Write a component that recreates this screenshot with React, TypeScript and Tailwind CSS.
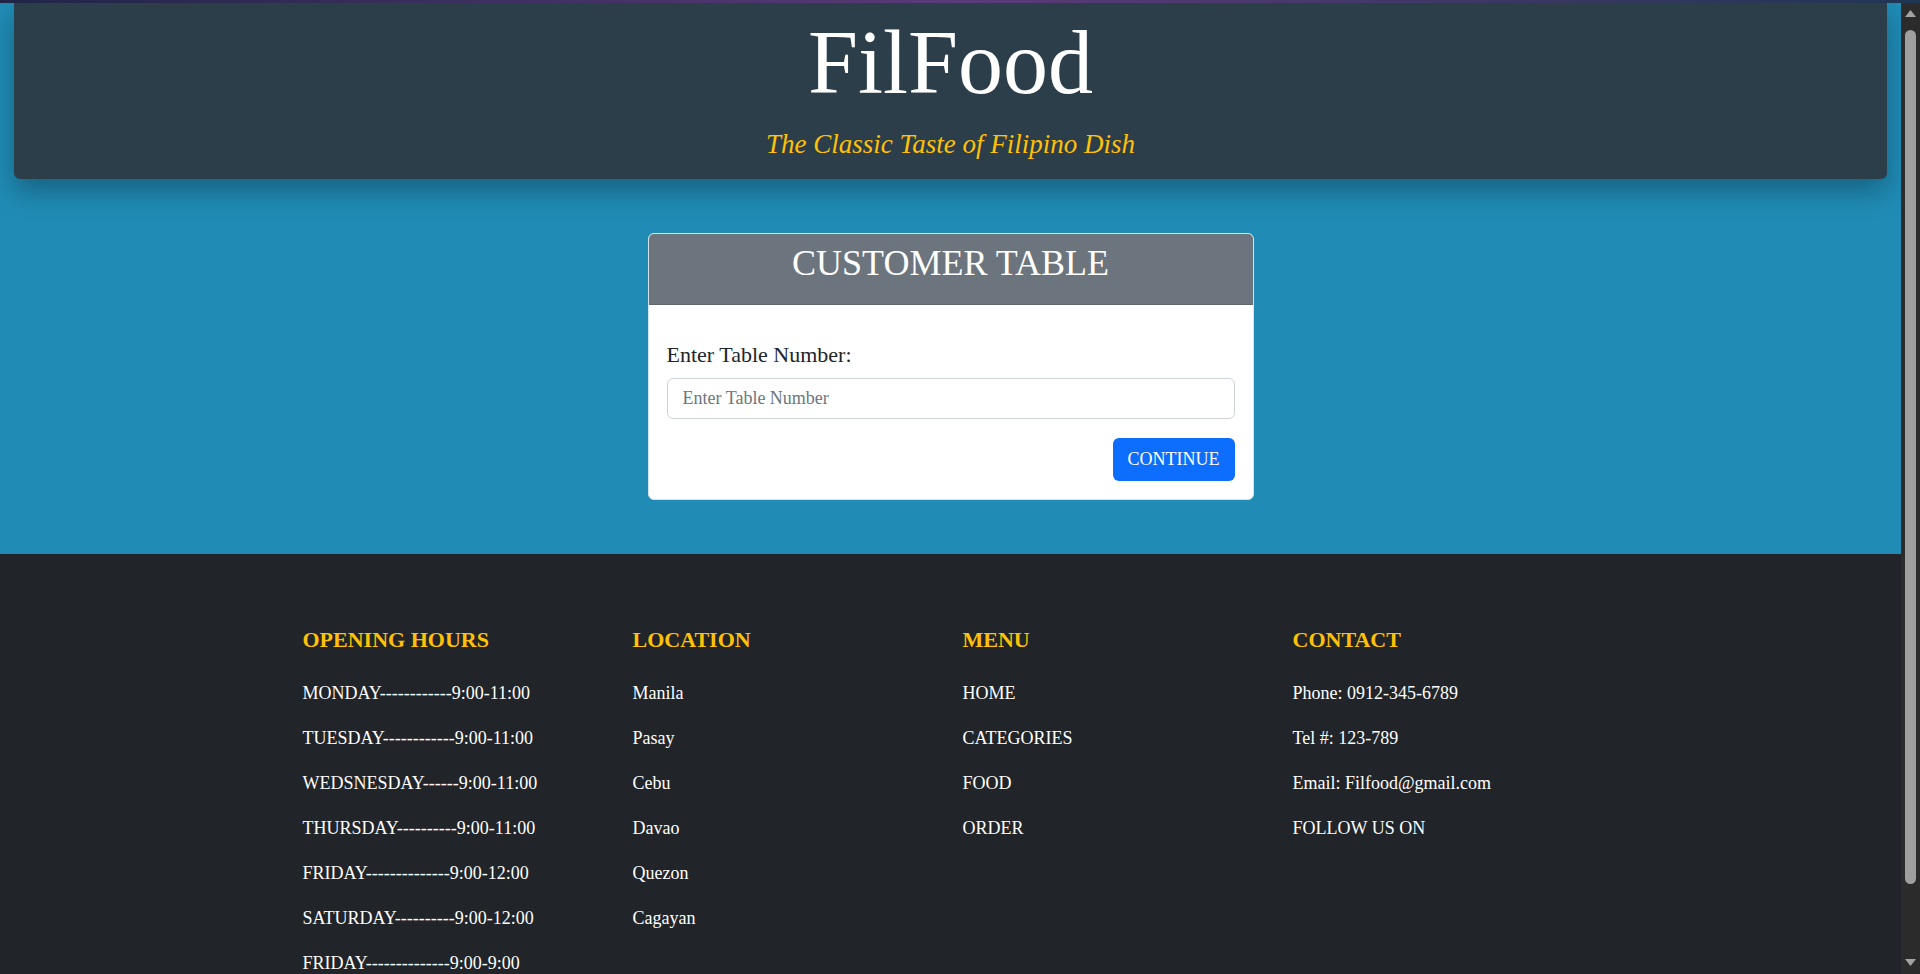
import React from 'react';

const hours = [
	'MONDAY------------9:00-11:00',
	'TUESDAY------------9:00-11:00',
	'WEDSNESDAY------9:00-11:00',
	'THURSDAY----------9:00-11:00',
	'FRIDAY--------------9:00-12:00',
	'SATURDAY----------9:00-12:00',
	'FRIDAY--------------9:00-9:00',
];

const locations = ['Manila', 'Pasay', 'Cebu', 'Davao', 'Quezon', 'Cagayan'];
const menu = ['HOME', 'CATEGORIES', 'FOOD', 'ORDER'];
const contact = ['Phone: 0912-345-6789', 'Tel #: 123-789', 'Email: Filfood@gmail.com', 'FOLLOW US ON'];

function FooterCol({ title, items }: { title: string; items: string[] }) {
	return (
		<div className="px-3">
			<h5 className="mb-[26px] text-[22px] font-bold leading-[1.2] text-[#ffc107]">{title}</h5>
			{items.map((item, i) => (
				<p key={i} className="mb-[18px] text-[18px] leading-[27px] text-white">
					{item}
				</p>
			))}
		</div>
	);
}

// browser scrollbar, as it shows in the picture
function ScrollBar() {
	return (
		<div className="flex w-[19px] shrink-0 flex-col items-center bg-[#2b2b2b]">
			<svg width="11" height="7" viewBox="0 0 11 7" className="mt-[7px]">
				<path d="M5.5 0L11 7H0z" fill="#a3a3a3" />
			</svg>
			<div className="mt-[13px] h-[854px] w-[11px] rounded-full bg-[#9f9f9f]"></div>
			<div className="flex-1"></div>
			<svg width="11" height="7" viewBox="0 0 11 7" className="mb-[8px]">
				<path d="M0 0H11L5.5 7z" fill="#a3a3a3" />
			</svg>
		</div>
	);
}

export default function App() {
	return (
		<div className="flex h-screen flex-col overflow-hidden bg-[#212529] font-['Liberation_Serif','Times_New_Roman',serif]">
			{/* window edge */}
			<div className="h-[3px] shrink-0 bg-gradient-to-r from-[#1f2547] via-[#5b3a78] to-[#1f3553]"></div>

			<div className="flex min-h-0 flex-1">
				<main className="min-w-0 flex-1 overflow-hidden">
					{/* hero */}
					<section className="bg-[#208cb6] pb-[54px]">
						<header className="mx-[14px] rounded-b-md bg-[#2c3e49] pt-[6px] pb-[19px] text-center shadow-[0_12px_28px_rgba(0,0,0,0.3)]">
							<h1 className="text-[90px] leading-[1.2] text-white">FilFood</h1>
							<p className="mt-[11px] text-[27px] italic leading-[1.2] text-[#ffc107]">
								The Classic Taste of Filipino Dish
							</p>
						</header>

						<div className="mx-auto mt-[54px] w-[606px] overflow-hidden rounded-md border border-[#d5e3ea] bg-white">
							<div className="h-[71px] border-b border-[#5f666d] bg-[#6c757d] pt-[8px] text-center text-[36px] leading-[1.2] text-white">
								CUSTOMER TABLE
							</div>
							<div className="px-[18px] pt-[33px] pb-[18px]">
								<label className="mb-[7px] block text-[22px] leading-[33px] text-[#212529]">
									Enter Table Number:
								</label>
								<input
									type="text"
									placeholder="Enter Table Number"
									className="block h-[41px] w-full rounded-md border border-[#ced4da] px-[15px] text-[18px] text-[#212529] placeholder:text-[#6c757d] outline-none"
								/>
								<div className="mt-[19px] flex justify-end">
									<button className="h-[43px] rounded-md bg-[#0d6efd] px-[15px] text-[18px] text-white">
										CONTINUE
									</button>
								</div>
							</div>
						</div>
					</section>

					{/* footer */}
					<footer className="bg-[#212529] pt-[73px] pb-[85px]">
						<div className="mx-auto grid w-[1320px] grid-cols-4">
							<FooterCol title="OPENING HOURS" items={hours} />
							<FooterCol title="LOCATION" items={locations} />
							<FooterCol title="MENU" items={menu} />
							<FooterCol title="CONTACT" items={contact} />
						</div>
					</footer>
				</main>
				<ScrollBar />
			</div>
		</div>
	);
}
